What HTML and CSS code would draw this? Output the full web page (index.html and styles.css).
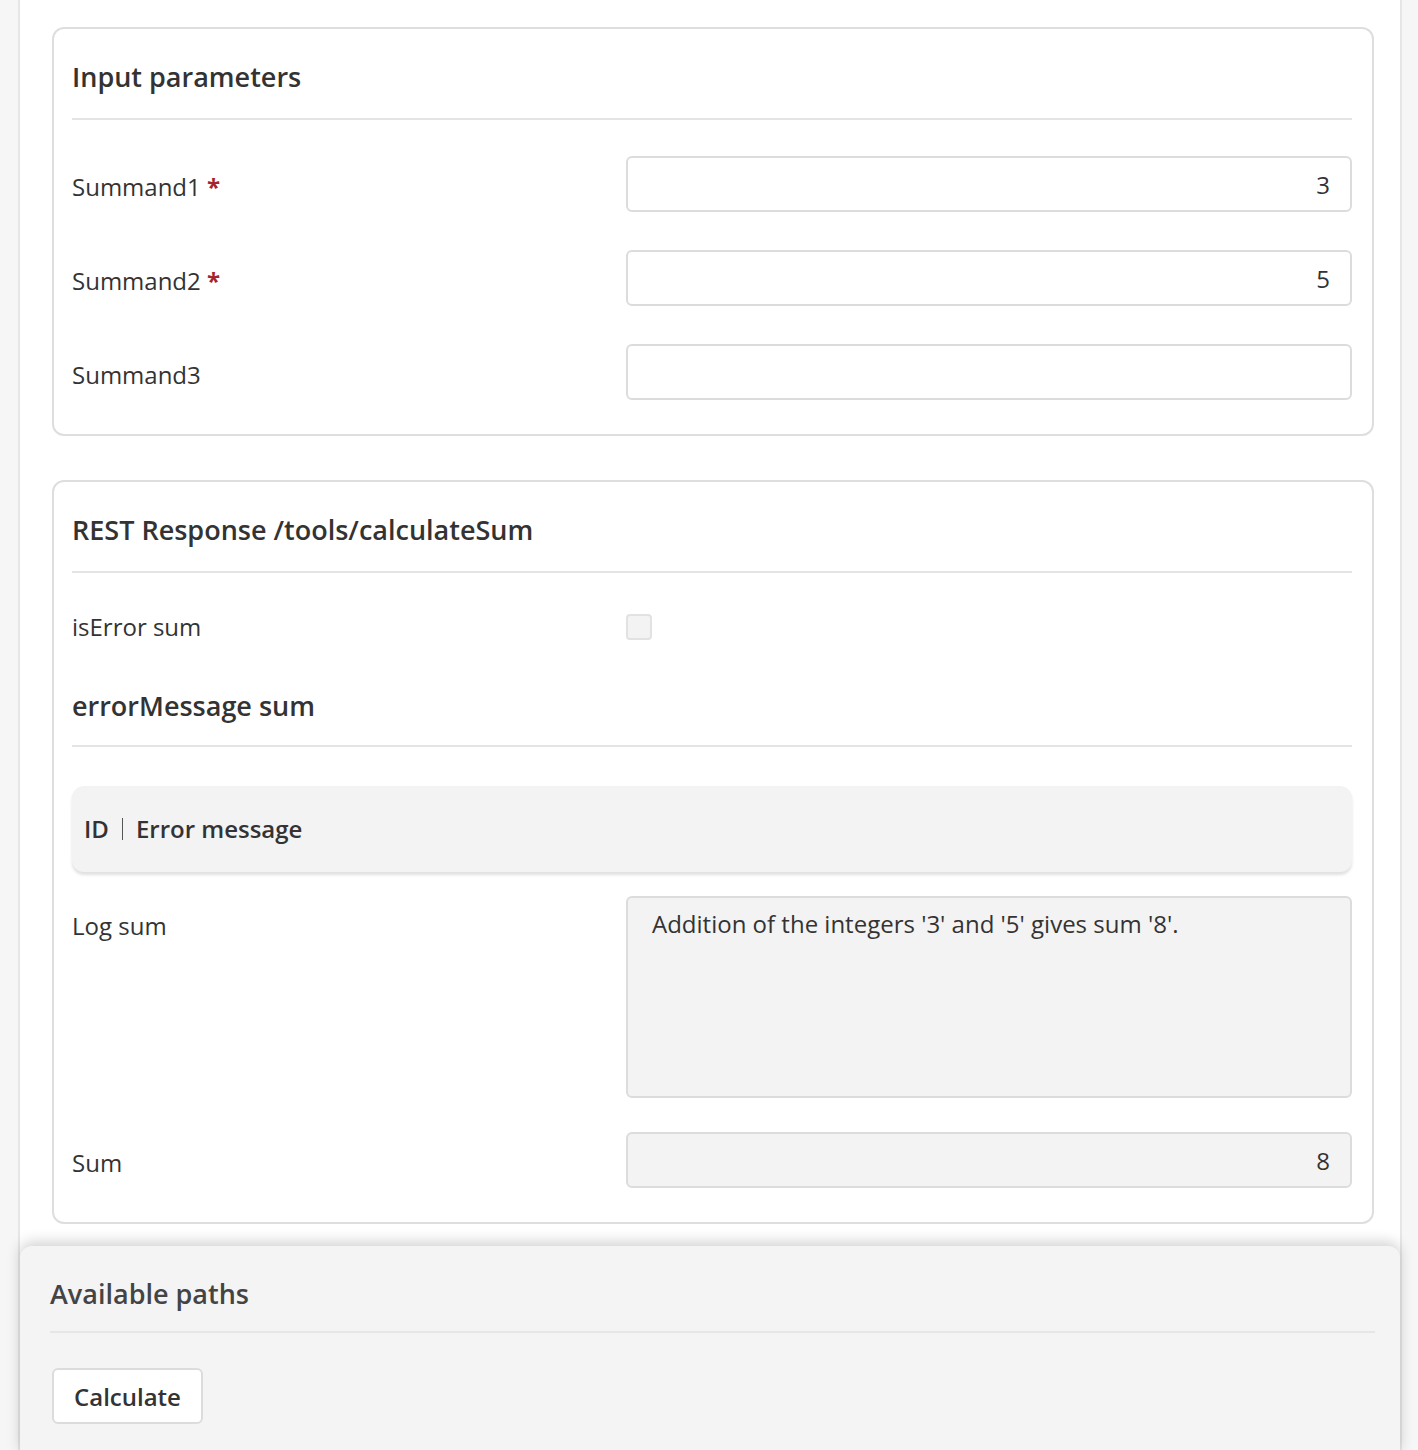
FILE: index.html
```html
<!DOCTYPE html>
<html lang="en">
<head>
    <meta charset="UTF-8">
    <meta name="viewport" content="width=device-width, initial-scale=1.0">
    <title>calculateSum</title>
    <link rel="stylesheet" href="styles.css">
</head>
<body>
    <div class="page">
        <!-- Input card -->
        <section class="card">
            <h2 class="card-title">Input parameters</h2>
            <div class="field">
                <label for="summand1">Summand1 <span class="required">*</span></label>
                <input type="text" id="summand1" class="num" value="3">
            </div>
            <div class="field">
                <label for="summand2">Summand2 <span class="required">*</span></label>
                <input type="text" id="summand2" class="num" value="5">
            </div>
            <div class="field">
                <label for="summand3">Summand3</label>
                <input type="text" id="summand3" class="num" value="">
            </div>
        </section>

        <!-- Response card -->
        <section class="card">
            <h2 class="card-title">REST Response /tools/calculateSum</h2>
            <div class="field field-check">
                <label for="isError">isError sum</label>
                <span class="checkbox" id="isError"></span>
            </div>
            <h3 class="sub-title">errorMessage sum</h3>
            <div class="table-head">
                <span class="col">ID</span>
                <span class="sep"></span>
                <span class="col">Error message</span>
            </div>
            <div class="field field-log">
                <label for="log">Log sum</label>
                <div class="textarea" id="log">Addition of the integers '3' and '5' gives sum '8'.</div>
            </div>
            <div class="field field-sum">
                <label for="sum">Sum</label>
                <input type="text" id="sum" class="num readonly" value="8" readonly>
            </div>
        </section>

        <!-- Paths panel -->
        <section class="paths">
            <h2 class="paths-title">Available paths</h2>
            <button type="button" class="btn">Calculate</button>
        </section>
    </div>
</body>
</html>
```

FILE: styles.css
```css
html, body {
    margin: 0;
    padding: 0;
}

body {
    font-family: "Open Sans", "Noto Sans", sans-serif;
    font-size: 24px;
    line-height: 32px;
    color: #333;
    background-color: #f6f6f6;
}

.page {
    margin: 0 16px 0 18px;
    border-left: 2px solid #e6e6e6;
    border-right: 2px solid #e6e6e6;
    background: #ffffff;
    padding: 27px 0 0 0;
    min-height: 1450px;
    box-sizing: border-box;
}

.card {
    margin: 0 26px 44px 32px;
    border: 2px solid #dedede;
    border-radius: 12px;
    padding: 20px 20px 34px 18px;
    background: #ffffff;
}

.card-title, .sub-title {
    margin: 0;
    font-size: 27px;
    font-weight: 600;
    color: #333;
    line-height: 32px;
    padding: 12px 0 25px;
    border-bottom: 2px solid #e4e4e4;
}

.field {
    display: grid;
    grid-template-columns: 554px 1fr;
    align-items: center;
    margin-top: 38px;
}

.card-title + .field {
    margin-top: 36px;
}

.field label {
    color: #333;
    padding-top: 5px;
}

.required {
    color: #a4262c;
    font-weight: 700;
}

input.num {
    height: 56px;
    box-sizing: border-box;
    border: 2px solid #dcdcdc;
    border-radius: 6px;
    padding: 0 20px;
    font-family: inherit;
    font-size: 24px;
    color: #333;
    text-align: right;
    background: #ffffff;
}

input.readonly {
    background: #f3f3f3;
}

.card-title + .field-check {
    margin-top: 38px;
}

.field-check label {
    padding-top: 0;
}

.checkbox {
    width: 26px;
    height: 26px;
    box-sizing: border-box;
    border: 2px solid #e2e2e2;
    border-radius: 4px;
    background: #f3f3f3;
}

.sub-title {
    margin-top: 47px;
    padding-top: 0;
    padding-bottom: 23px;
}

.table-head {
    display: flex;
    align-items: center;
    gap: 13px;
    margin-top: 39px;
    height: 86px;
    padding: 0 12px;
    background: #f3f3f3;
    border-radius: 12px;
    box-shadow: 0 3px 3px rgba(0, 0, 0, 0.12);
    font-weight: 600;
    color: #333;
}

.table-head .sep {
    width: 1px;
    height: 22px;
    background: #555;
}

.field-log {
    align-items: start;
    margin-top: 24px;
}

.field-log label {
    padding-top: 14px;
}

.textarea {
    height: 202px;
    box-sizing: border-box;
    border: 2px solid #dcdcdc;
    border-radius: 6px;
    padding: 10px 24px;
    background: #f3f3f3;
}

.field-sum {
    margin-top: 34px;
}

.paths {
    margin-top: -22px;
    background: #f4f4f4;
    border-radius: 12px 12px 0 0;
    box-shadow: 0 -4px 14px rgba(0, 0, 0, 0.18);
    padding: 32px 25px 30px 30px;
    position: relative;
}

.paths-title {
    margin: 0;
    font-size: 27px;
    font-weight: 600;
    color: #444;
    line-height: 32px;
    padding-bottom: 21px;
    border-bottom: 2px solid #e6e6e6;
}

.btn {
    margin-top: 35px;
    margin-left: 2px;
    height: 56px;
    padding: 0 20px;
    font-family: inherit;
    font-size: 24px;
    font-weight: 600;
    color: #333;
    background: #ffffff;
    border: 2px solid #dcdcdc;
    border-radius: 6px;
}
```
